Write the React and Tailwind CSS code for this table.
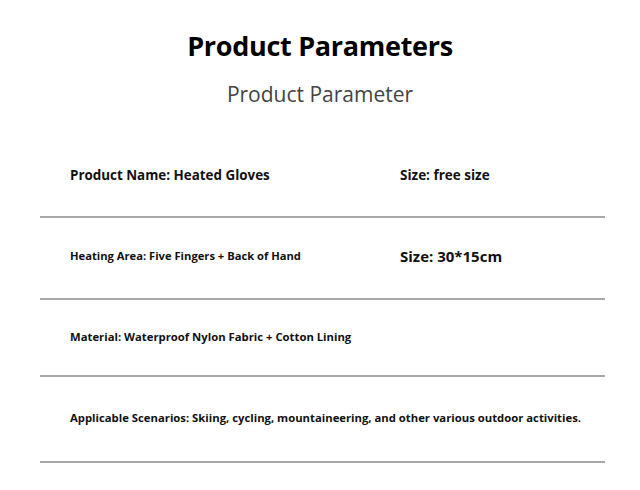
// Product parameter sheet — heated gloves
const ROWS = [
  {
    left: 'Product Name: Heated Gloves',
    right: 'Size: free size',
    leftCls: 'text-[13.4px]',
    rightCls: 'text-[13.5px]',
    pad: 'pt-[57px] pb-[31px]',
  },
  {
    left: 'Heating Area: Five Fingers + Back of Hand',
    right: 'Size: 30*15cm',
    leftCls: 'text-[11.2px]',
    rightCls: 'text-[15px]',
    pad: 'pt-[28px] pb-[32px]',
  },
  {
    left: 'Material: Waterproof Nylon Fabric + Cotton Lining',
    leftCls: 'text-[11.3px]',
    pad: 'pt-[27px] pb-[28px]',
  },
  {
    left: 'Applicable Scenarios: Skiing, cycling, mountaineering, and other various outdoor activities.',
    leftCls: 'text-[11.3px]',
    pad: 'pt-[31px] pb-[33px]',
  },
]

export default function App() {
  return (
    <div className="w-[640px] h-[490px] bg-white overflow-hidden font-['Open_Sans','Lato',sans-serif] text-[#111]">
      {/* Header */}
      <div className="flex flex-col items-center pt-[28px]">
        <h1 className="h-[36px] leading-[36px] text-[27px] font-bold text-black tracking-[-0.3px]">Product Parameters</h1>
        <p className="mt-[16px] h-[28px] leading-[28px] text-[21px] text-[#444]">Product Parameter</p>
      </div>

      {/* Rows */}
      <div className="px-[40px] pr-[35px]">
        {ROWS.map((r, i) => (
          <div key={i}>
            <div className={`flex items-center h-[20px] pl-[30px] ${r.pad}`} style={{ boxSizing: 'content-box' }}>
              <div className={`w-[330px] shrink-0 whitespace-nowrap font-bold ${r.leftCls}`}>{r.left}</div>
              {r.right && <div className={`whitespace-nowrap font-bold ${r.rightCls}`}>{r.right}</div>}
            </div>
            <div className="h-[2px] bg-[#a8a8a8]" />
          </div>
        ))}
      </div>
    </div>
  )
}
